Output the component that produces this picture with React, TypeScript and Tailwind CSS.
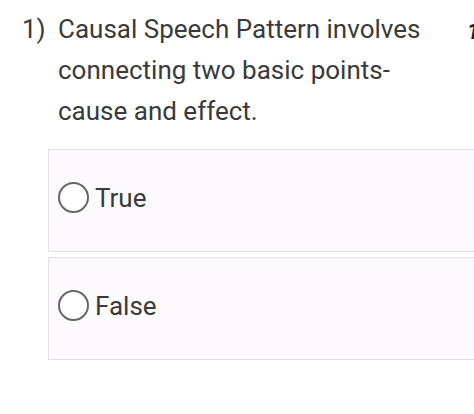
import React from "react";

function Option({ label }: { label: string }) {
  return (
    <div className="flex h-[103px] w-[440px] shrink-0 items-center border-[1.5px] border-[#e3e3e3] bg-[#fdfafd] pb-[6px] pl-[9px]">
      <span className="h-[31px] w-[31px] shrink-0 rounded-full border-2 border-[#666666] bg-white" />
      <span className="ml-[6px] text-[26px] leading-none text-[#3a3a3a]">{label}</span>
    </div>
  );
}

export default function App() {
  return (
    <div
      className="relative h-[414px] w-[474px] overflow-hidden bg-white"
      style={{ fontFamily: "Roboto, 'Noto Sans', sans-serif" }}
    >
      <div className="flex pt-[9px] text-[26px] leading-[41px] text-[#3a3a3a]">
        <div className="w-[58px] shrink-0 pl-[22px]">1)</div>
        <div className="w-[375px] shrink-0">
          Causal Speech Pattern involves connecting two basic points- cause and effect.
        </div>
        <div className="ml-[34px] shrink-0 pt-[3px] text-[22px] font-bold italic leading-[40px] text-[#222222]">1</div>
      </div>
      <div className="mt-[17px] flex flex-col gap-[5px] pl-[48px]">
        <Option label="True" />
        <Option label="False" />
      </div>
    </div>
  );
}
